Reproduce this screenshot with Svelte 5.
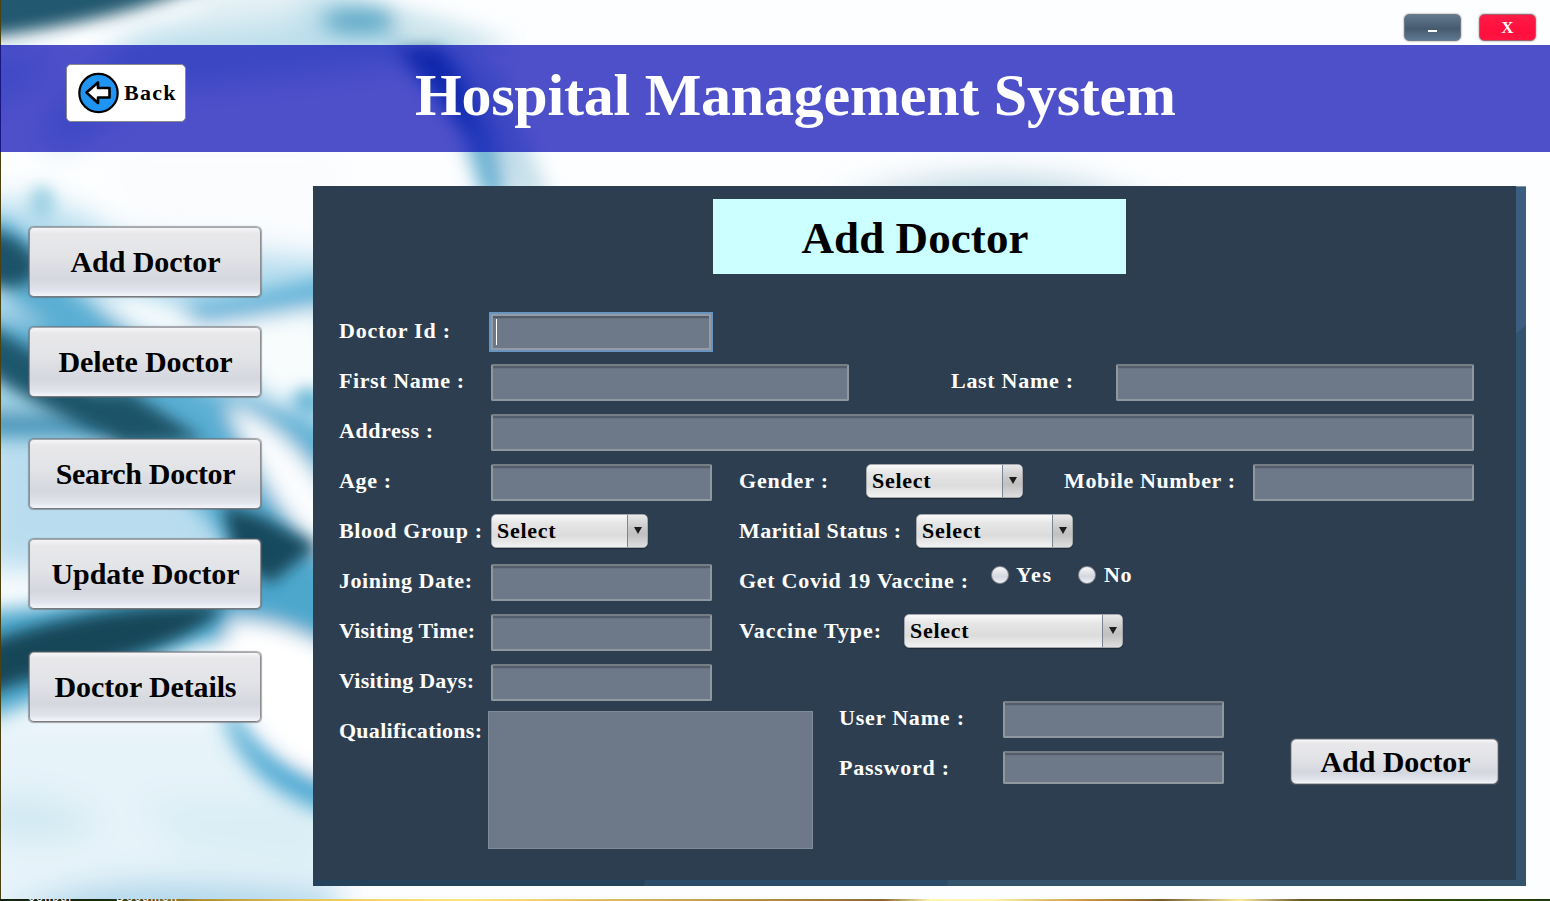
<script>
  const menu = [
    { text: 'Add Doctor', w: 150, gap: 0 },
    { text: 'Delete Doctor', w: 174, gap: 30 },
    { text: 'Search Doctor', w: 180, gap: 42 },
    { text: 'Update Doctor', w: 188, gap: 30 },
    { text: 'Doctor Details', w: 182, gap: 43 }
  ];

  // Spreads the letters of a caption over a given width.
  function fit(node, width) {
    const n = node.textContent.length;
    const range = document.createRange();
    range.selectNodeContents(node);
    const natural = range.getBoundingClientRect().width;
    node.style.letterSpacing = (width - natural) / (n - 1) + 'px';
  }
</script>

{#snippet label(text, w)}
  <span class="label" use:fit={w}>{text}</span>
{/snippet}

{#snippet combo()}
  <div class="combo">
    <span class="value"><span use:fit={58.5}>Select</span></span>
    <span class="drop"><svg width="8" height="7" viewBox="0 0 8 7"><path d="M0 0H8L4 7Z" fill="#1c1c1c" /></svg></span>
  </div>
{/snippet}

<div class="window">
  <svg class="backdrop" width="1550" height="901" viewBox="0 0 1550 901" preserveAspectRatio="none">
    <defs>
      <filter id="b6" x="-30%" y="-30%" width="160%" height="160%"><feGaussianBlur stdDeviation="8" /></filter>
      <filter id="b9" x="-30%" y="-30%" width="160%" height="160%"><feGaussianBlur stdDeviation="10" /></filter>
      <filter id="b16" x="-40%" y="-40%" width="180%" height="180%"><feGaussianBlur stdDeviation="16" /></filter>
    </defs>
    <rect width="1550" height="901" fill="#fdfeff" />
    <g filter="url(#b16)">
      <path d="M130 35Q230 15 320 -20L400 20L500 48L300 75L150 90L60 150L40 130Z" fill="#bcdeeb" />
      <path d="M-20 60L60 55L20 90L-20 110Z" fill="#c4e2ee" />
      <path d="M200 -20H330L290 20L190 30Z" fill="#e4f1f5" />
      <path d="M-20 205Q60 190 120 240L340 260V560H-20Z" fill="#b4dcee" />
      <path d="M110 150H340V235Q180 250 120 200Z" fill="#fafcfe" />
      <path d="M-20 430H220V570H-20Z" fill="#b9ddef" />
      <path d="M-20 715H240L340 840V920H-20Z" fill="#e6f3f9" />
      <path d="M-20 800Q60 790 100 825Q40 850 -20 830Z" fill="#cfe8f1" />
      <path d="M140 800H330V870L180 850Z" fill="#daeef5" />
      <path d="M60 895Q150 870 340 895V930H-20Z" fill="#add6ea" />
      <path d="M830 205Q960 165 1080 185L1180 215Z" fill="#b5d2de" />
    </g>
    <g filter="url(#b9)">
      <path d="M-20 212Q30 225 70 290L150 345L215 400L320 450L340 510V620L240 560L200 510L110 425L-20 340V322Q30 320 10 290Z" fill="#5aaed3" />
      <path d="M-20 612Q120 600 220 575L340 560V650Q270 625 225 640Q200 640 150 660L-20 722Z" fill="#4ea7cd" />
      <path d="M-20 412H110V436H-20Z" fill="#3a8fb5" />
      <path d="M-20 375Q40 380 90 412H-20Z" fill="#a4d6e9" />
      <path d="M180 306Q250 298 340 272V300Q250 320 195 328Z" fill="#62b2d8" />
      <path d="M180 395Q240 380 340 440V470L240 430Z" fill="#5db0d4" />
      <path d="M95 297Q160 290 200 325L320 310L350 400L275 398L215 345L140 330Z" fill="#f8fcfd" />
      <path d="M225 405Q290 420 345 520V575Q290 530 262 475Z" fill="#fbfdfe" />
      <path d="M-20 295Q20 300 50 330L20 325H-20Z" fill="#9fd0e6" />
      <path d="M225 620Q290 618 345 660V790Q260 740 225 620Z" fill="#fff" />
      <path d="M228 700Q260 770 345 785V818Q250 795 225 720Z" fill="#4ba7d2" />
      <path d="M410 30Q460 70 482 130L520 200H550L500 70Z" fill="#c4dfea" />
      <path d="M385 40L445 42Q480 90 495 140L508 200H484L462 130L425 85Z" fill="#62add0" />
      <ellipse cx="360" cy="21" rx="38" ry="13" fill="#5fa9c6" />
      <path d="M400 12L520 45L400 60Z" fill="#cfe6ed" />
    </g>
    <g filter="url(#b6)">
      <path d="M-20 -20H215Q120 22 -20 38Z" fill="#24596f" />
      <path d="M-20 228Q30 234 40 270Q20 300 -20 280Z" fill="#1d5269" />
      <path d="M-20 322Q40 350 110 405L185 440H115Q40 410 -20 368Z" fill="#1d566d" />
      <path d="M60 392H130L205 440L120 445Z" fill="#1f5368" />
      <path d="M222 504L262 516L318 546L270 584L235 560Z" fill="#17495d" />
      <path d="M-20 645Q100 600 225 606Q190 650 28 680L-20 697Z" fill="#184659" />
      <path d="M396 48H440L462 90L478 140L435 85Z" fill="#34789c" />
      <ellipse cx="42" cy="203" rx="12" ry="17" fill="#9bd0e3" />
      <ellipse cx="308" cy="402" rx="14" ry="14" fill="#6bb7d7" />
    </g>
    <rect width="1" height="901" fill="#4a4113" />
  </svg>

  <div class="content">
    <div class="winbar">
      <button class="wbtn min"><span>_</span></button>
      <button class="wbtn close">X</button>
    </div>

    <header>
      <button class="back">
        <svg width="42" height="42" viewBox="0 0 42 42">
          <circle cx="20.5" cy="21" r="19.2" fill="#2094f3" stroke="#000" stroke-width="2.2" />
          <path d="M8.5 20.5L20 10.5V16H31.5V25.5H20V31Z" fill="#fff" stroke="#000" stroke-width="2.6" stroke-linejoin="round" />
        </svg>
        <span use:fit={51.5}>Back</span>
      </button>
      <h1 use:fit={761}>Hospital Management System</h1>
    </header>

    <div class="main">
      <nav>
        {#each menu as m}
          <button class="metal side" style="margin-top: {m.gap}px"><span use:fit={m.w}>{m.text}</span></button>
        {/each}
      </nav>

      <div class="frame">
        <svg class="shade" width="1213" height="700" viewBox="0 0 1213 700">
          <rect width="1213" height="700" fill="#34546c" />
          <path d="M1200 0H1213V400H1200Z" fill="#31546f" />
          <path d="M1200 0H1213V139Q1206 146 1200 149Z" fill="#3b5d7f" />
          <path d="M1200 0H1213V1H1200Z" fill="#8396a5" />
          <path d="M0 690H333L331 700H0Z" fill="#24435a" />
          <path d="M333 690H636L634 700H331Z" fill="#2b4c68" />
        </svg>
        <section class="panel">
          <h2><span use:fit={227}>Add Doctor</span></h2>

          <div class="row r-one">
            {@render label('Doctor Id :', 111)}
            <div class="field focus"><i></i></div>
          </div>
          <div class="row r-name">
            {@render label('First Name :', 125)}
            <div class="field"></div>
            {@render label('Last Name :', 122)}
            <div class="field"></div>
          </div>
          <div class="row r-address">
            {@render label('Address :', 94)}
            <div class="field"></div>
          </div>
          <div class="row r-age">
            {@render label('Age :', 52)}
            <div class="field"></div>
            {@render label('Gender :', 89)}
            {@render combo()}
            {@render label('Mobile Number :', 171)}
            <div class="field"></div>
          </div>
          <div class="row r-blood">
            {@render label('Blood Group :', 143)}
            {@render combo()}
            {@render label('Maritial Status :', 162)}
            {@render combo()}
          </div>
          <div class="row r-join">
            {@render label('Joining Date:', 133)}
            <div class="field"></div>
            {@render label('Get Covid 19 Vaccine :', 229)}
            <div class="choices">
              <span class="radio"></span><span class="opt yes" use:fit={35}>Yes</span>
              <span class="radio"></span><span class="opt no" use:fit={27.5}>No</span>
            </div>
          </div>
          <div class="row r-time">
            {@render label('Visiting Time:', 136)}
            <div class="field"></div>
            {@render label('Vaccine Type:', 142)}
            {@render combo()}
          </div>
          <div class="foot">
            <div class="left">
              <div class="row r-one">
                {@render label('Visiting Days:', 135)}
                <div class="field"></div>
              </div>
              <div class="row r-qual">
                {@render label('Qualifications:', 143)}
                <div class="area"></div>
              </div>
            </div>
            <div class="account">
              <div class="row r-acc">
                {@render label('User Name :', 125)}
                <div class="field"></div>
              </div>
              <div class="row r-acc">
                {@render label('Password :', 110)}
                <div class="field short"></div>
              </div>
            </div>
            <button class="metal submit"><span use:fit={150}>Add Doctor</span></button>
          </div>
        </section>
      </div>
    </div>

    <div class="strip"><span class="s1">Jonbur</span><span class="s2">Documen</span></div>
  </div>
</div>

<style>
  :global(body) { margin: 0; overflow: hidden; }
  .window {
    position: relative;
    width: 1550px;
    height: 901px;
    overflow: hidden;
    font-family: "Liberation Serif", "Times New Roman", serif;
    font-weight: bold;
    color: #fff;
  }
  .backdrop { position: absolute; inset: 0; display: block; }
  .content { position: relative; display: flex; flex-direction: column; height: 901px; }
  button {
    box-sizing: border-box;
    padding: 0;
    font: inherit;
    white-space: nowrap;
    display: flex;
    align-items: center;
    justify-content: center;
  }
  .winbar {
    flex: none;
    box-sizing: border-box;
    height: 45px;
    padding: 14px 14px 0 0;
    display: flex;
    justify-content: flex-end;
    gap: 18px;
  }
  .wbtn {
    width: 57px;
    height: 27px;
    border: 1px solid #7d8388;
    border-radius: 5px;
    color: #fff;
    font-size: 17px;
    box-shadow: 0 0 2px #777;
  }
  .min { background: linear-gradient(#62798f, #465a6e 55%, #5f7991); border-color: #6d7984; }
  .min span { display: block; width: 9px; height: 2px; margin-top: 7px; background: #fff; overflow: hidden; color: transparent; font-size: 2px; }
  .close { background: linear-gradient(#ff1c47, #ff0f3c 60%, #ff1443); border-color: #a5606f; }

  header {
    flex: none;
    height: 107px;
    display: flex;
    background: rgba(3, 6, 178, 0.7);
  }
  .back {
    width: 120px;
    height: 58px;
    margin: 19px 0 0 66px;
    padding: 0 8px 0 11px;
    justify-content: flex-start;
    gap: 4px;
    background: #fff;
    border: 1px solid #8a8a8a;
    border-radius: 5px;
    font-size: 22px;
    color: #000;
  }
  .back svg { flex: none; }
  h1 {
    margin: 0 0 0 229px;
    font-size: 60px;
    line-height: 101px;
    white-space: nowrap;
  }

  .main { flex: none; height: 747px; display: flex; }
  nav { width: 313px; box-sizing: border-box; padding: 75px 0 0 29px; }
  .metal {
    padding-left: 1px;
    color: #000;
    font-size: 30px;
    border: 1px solid #77797d;
    border-top-color: #a4a6a9;
    border-left-color: #8d8f92;
    border-right-color: #8d8f92;
    border-radius: 5px;
    background: linear-gradient(#f6f6f8, #e8e8eb 8%, #e3e4e7 40%, #d5d7df 75%, #e1e4ec 92%, #f4f6fb);
    box-shadow: 0 0 1px 0.5px rgba(100, 100, 105, 0.55);
  }
  .side { width: 232px; height: 70px; }
  .frame { position: relative; margin-top: 34px; width: 1213px; height: 700px; }
  .shade { position: absolute; inset: 0; display: block; }
  .panel { position: relative; box-sizing: border-box; width: 1203px; height: 694px; background: #2d3e50; padding: 13px 0 0 26px; }
  h2 {
    margin: 0 0 32px 374px;
    box-sizing: border-box;
    padding-right: 9px;
    width: 413px;
    height: 75px;
    background: #ccffff;
    color: #000;
    text-align: center;
    font-size: 45px;
    line-height: 78px;
  }
  .row { display: grid; height: 50px; font-size: 22px; align-items: start; }
  .label { line-height: 50px; white-space: nowrap; }
  .r-one { grid-template-columns: 152px 221px; }
  .r-name { grid-template-columns: 152px 460px 165px 358px; }
  .r-name .field:nth-child(2) { width: 358px; }
  .r-address { grid-template-columns: 152px 983px; }
  .r-age { grid-template-columns: 152px 248px 127px 198px 189px 221px; }
  .r-age .field { width: 221px; }
  .r-blood { grid-template-columns: 152px 248px 177px 157px; }
  .r-join { grid-template-columns: 152px 221px 252px auto; }
  .r-time { grid-template-columns: 152px 221px 165px 219px; }
  .r-join .label:nth-child(3), .r-time .label:nth-child(3) { margin-left: 27px; }
  .r-time .combo { margin-left: 27px; width: 219px; }
  .r-join .choices { margin-left: 27px; }
  .r-qual { grid-template-columns: 149px 325px; }
  .r-acc { grid-template-columns: 164px 221px; }

  .field {
    box-sizing: border-box;
    height: 37px;
    margin-top: 8px;
    background: #6d7989;
    border: 2px solid #8f979f;
    border-top-color: #767d85;
    border-radius: 2px;
    box-shadow: inset 0 2px 0 #535d6b, inset 0 3px 0 #677281;
  }
  .short { height: 33px; }
  .focus { border-color: #949ba4; outline: 2px solid #6a94c0; outline-offset: 0; border-radius: 0; height: 36px; width: 220px; }
  .focus i { display: block; width: 1px; height: 26px; margin: 3px 0 0 3px; background: #fff; }
  .combo {
    width: 157px;
    height: 34px;
    margin-top: 8px;
    box-sizing: border-box;
    border: 1px solid #a5a9ae;
    border-radius: 5px;
    background: linear-gradient(#fafafa, #e6e6e6 25%, #dcdcdc 65%, #f2f2f2);
    color: #000;
    display: flex;
    overflow: hidden;
    box-shadow: 0 1px 1px #1f2c39;
  }
  .value { flex: 1; padding-left: 5px; line-height: 32px; }
  .drop {
    width: 19px;
    border-left: 1px solid #788694;
    background: linear-gradient(#e8e8e8, #c9c9c9 40%, #c0c0c0 60%, #dedede);
    display: flex;
    align-items: center;
    justify-content: center;
  }
  .drop svg { margin: -2px 0 0 1px; }
  .choices { display: flex; align-items: center; height: 37px; }
  .radio {
    width: 18px;
    height: 18px;
    box-sizing: border-box;
    border: 1px solid #858990;
    border-radius: 50%;
    background: linear-gradient(#f6f6f8, #d3d6de 60%, #eff1f6);
  }
  .opt { margin-left: 7px; line-height: 37px; }
  .yes { margin-right: 25px; }
  .no { margin-left: 8.5px; }
  .foot { display: flex; height: 200px; }
  .left { width: 500px; }
  .area { height: 138px; margin-top: 5px; box-sizing: border-box; border: 1px solid #7f8b98; background: #6d7989; }
  .account { padding-top: 37px; width: 452px; }
  .submit { width: 207px; height: 45px; margin-top: 83px; border-color: #b5b7bb; padding-left: 2px; }
  .strip {
    height: 2px;
    overflow: hidden;
    position: relative;
    font: 12px/12px "Liberation Sans", sans-serif;
    background: linear-gradient(90deg, #10230f, #1b2a10 7%, #b39238 13%, #e8c75c 20%, #ffe97c 30%, #8a6a30 57%, #fff6b0 60%, #fff3b0 64%, #c79b43 70%, #7a5f2c 75%, #ffe9a0 80%, #665628 84%, #2d4a0c 93%, #1f3a0b);
  }
  .strip span { position: absolute; top: -8px; }
  .s1 { left: 29px; letter-spacing: 1.3px; }
  .s2 { left: 116px; letter-spacing: 1.6px; }
</style>
